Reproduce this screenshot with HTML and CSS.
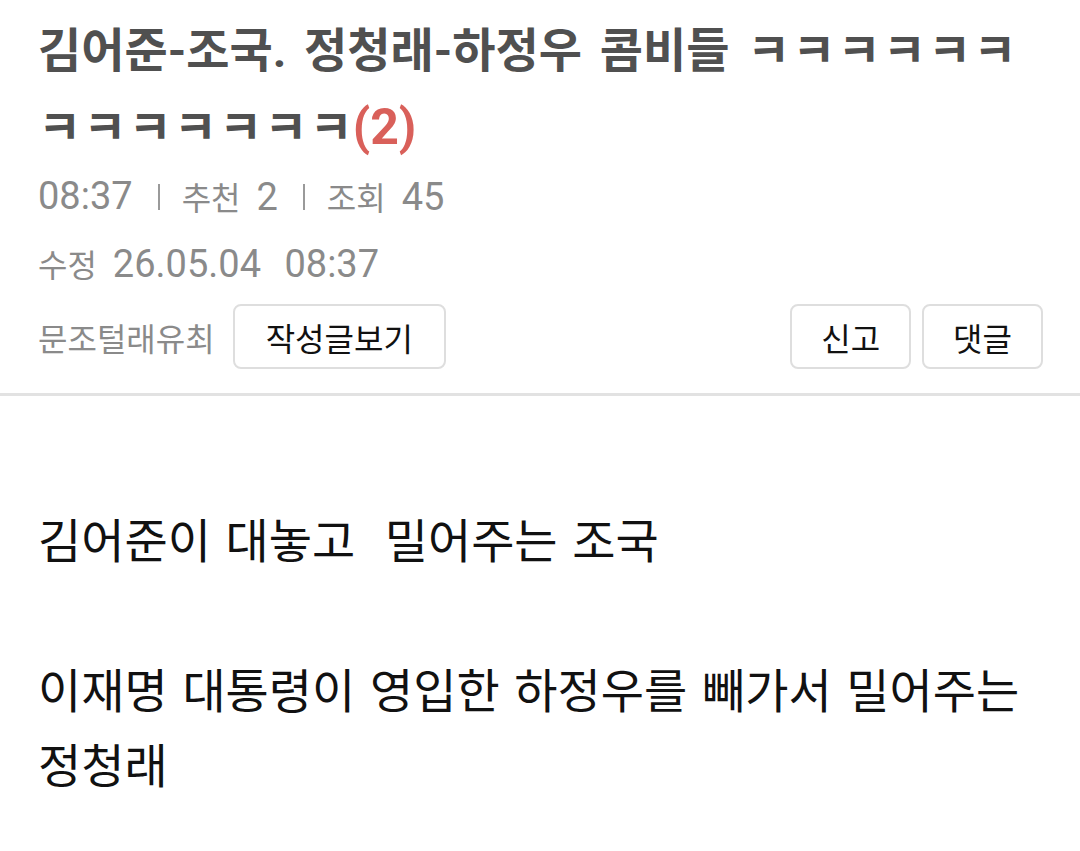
FILE: index.html
```html
<!DOCTYPE html>
<html lang="ko">
<head>
    <meta charset="UTF-8">
    <meta name="viewport" content="width=device-width, initial-scale=1.0">
    <title>김어준-조국. 정청래-하정우 콤비들</title>
    <link rel="stylesheet" href="styles.css">
</head>
<body>

    <div class="post-head">
        <h1 class="title">김어준-조국. 정청래-하정우 콤비들 <span class="kk">ㅋㅋㅋㅋㅋㅋㅋㅋㅋㅋㅋㅋㅋ</span><span class="cmt-count">(2)</span></h1>

        <div class="meta">
            <span class="num">08:37</span>
            <span class="bar"></span>
            <span>추천 <span class="num">2</span></span>
            <span class="bar"></span>
            <span>조회 <span class="num">45</span></span>
        </div>

        <div class="meta edited">
            <span>수정 <span class="num">26.05.04 <span class="time">08:37</span></span></span>
        </div>

        <div class="actions">
            <div class="author">
                <span class="nick">문조털래유최</span>
                <button class="btn">작성글보기</button>
            </div>
            <div class="right-btns">
                <button class="btn">신고</button>
                <button class="btn">댓글</button>
            </div>
        </div>
    </div>

    <div class="post-body">
        <p>김어준이 대놓고&nbsp; 밀어주는 조국</p>
        <p>&nbsp;</p>
        <p>이재명 대통령이 영입한 하정우를 빼가서 밀어주는 정청래</p>
    </div>

</body>
</html>
```

FILE: styles.css
```css
body {
    font-family: Roboto, "Noto Sans CJK KR", sans-serif;
    margin: 0;
    padding: 0;
    background-color: #ffffff;
    color: #111;
}
.post-head {
    padding: 12px 37px 0 38px;
    border-bottom: 3px solid #e2e2e2;
}
.title {
    margin: 0;
    font-size: 47px;
    line-height: 77px;
    font-weight: bold;
    color: #505050;
    word-spacing: 6px;
}
.title .kk {
    letter-spacing: 2px;
}
.cmt-count {
    color: #d9605a;
    font-size: 50px;
    font-family: Roboto, sans-serif;
    margin-left: -2px;
}
.meta {
    display: flex;
    align-items: center;
    height: 60px;
    font-size: 32px;
    color: #8a8a8a;
    word-spacing: 8px;
}
.meta .num {
    font-size: 38px;
}
.meta .time {
    margin-left: 6px;
}
.meta .bar {
    display: inline-block;
    width: 2px;
    height: 26px;
    background-color: #9a9a9a;
    margin: 2px 22px 0 25px;
}
.edited {
    margin-top: 7px;
}
.actions {
    display: flex;
    justify-content: space-between;
    align-items: center;
    margin-top: 11px;
    padding-bottom: 24px;
}
.author {
    display: flex;
    align-items: center;
}
.nick {
    font-size: 32px;
    color: #8a8a8a;
    margin-right: 18px;
}
.right-btns {
    display: flex;
    gap: 11px;
}
.btn {
    font-family: Roboto, "Noto Sans CJK KR", sans-serif;
    font-size: 32px;
    color: #111;
    background-color: #fff;
    border: 2px solid #dedede;
    border-radius: 8px;
    height: 65px;
    padding: 0 31px;
}
.right-btns .btn {
    padding: 0 29px;
}
.post-body {
    padding: 108px 38px 0 38px;
}
.post-body p {
    margin: 0;
    font-size: 47px;
    line-height: 75px;
    color: #111;
    word-spacing: 3px;
}
```
